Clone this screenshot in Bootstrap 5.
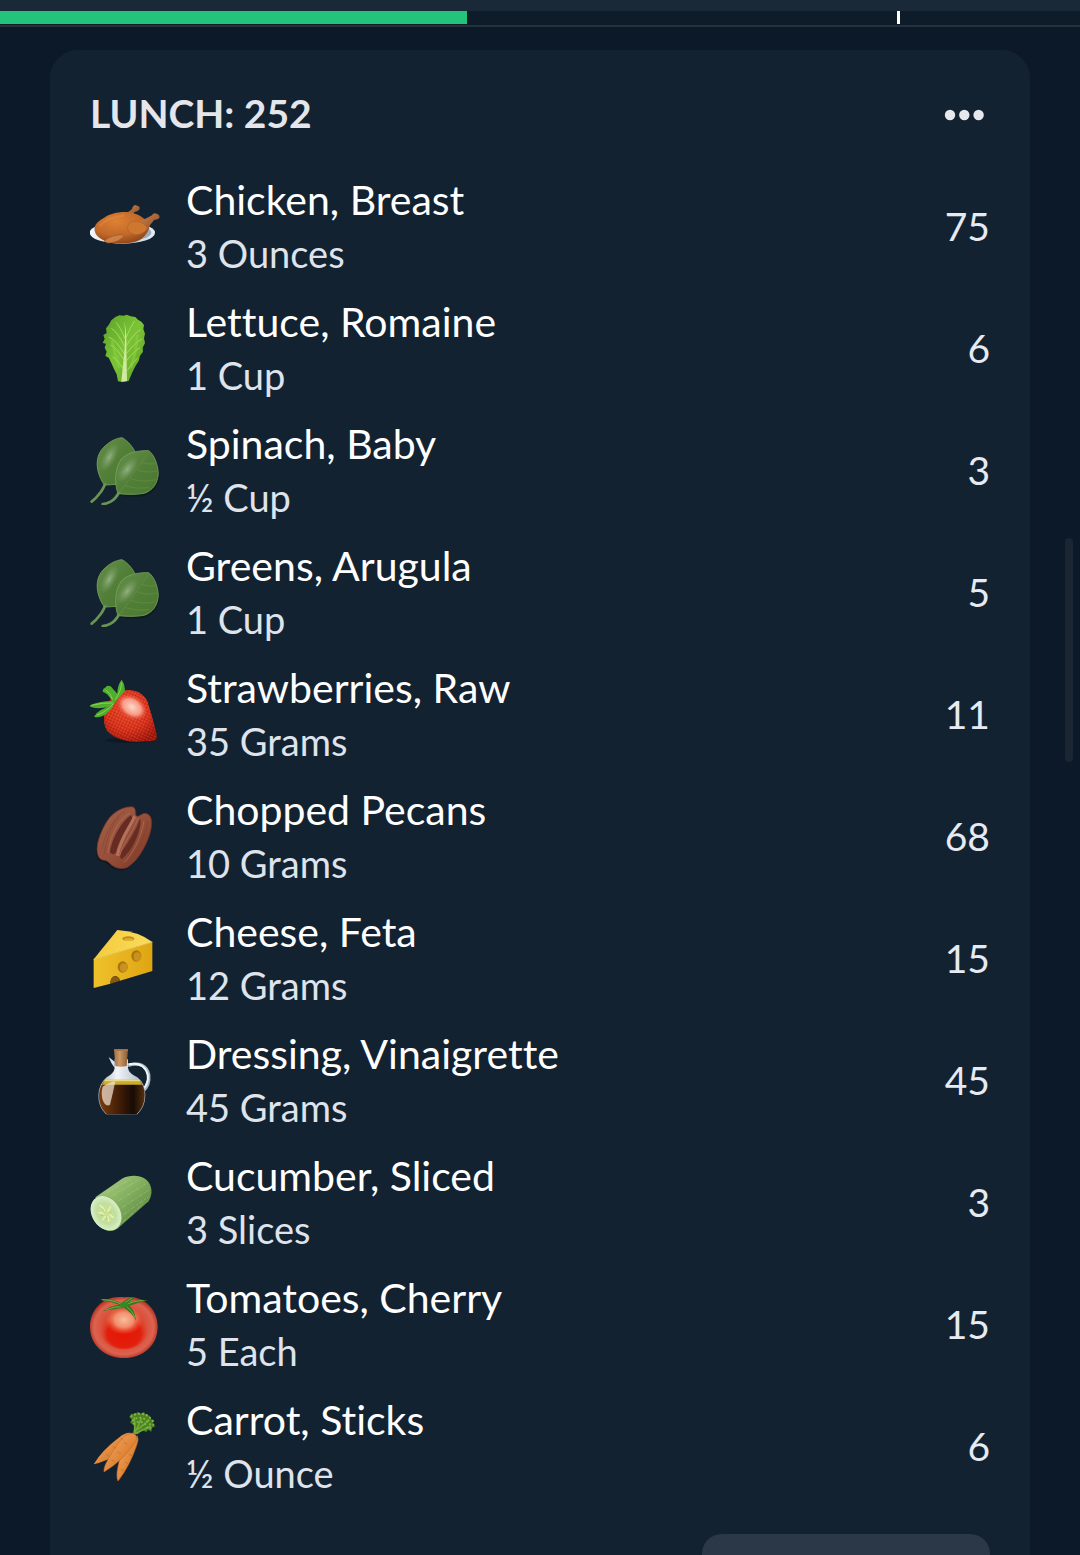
<!DOCTYPE html>
<html lang="en" data-bs-theme="dark">
<head>
<meta charset="utf-8">
<meta name="viewport" content="width=device-width, initial-scale=1">
<title>Lunch log</title>
<link href="https://cdn.jsdelivr.net/npm/bootstrap@5.3.0/dist/css/bootstrap.min.css" rel="stylesheet">
<style>
body{background:#0c1928;color:#fff;font-family:Lato,"Liberation Sans",sans-serif;font-variant-ligatures:none}
.budget-bar{background:#1a2938;padding-top:11px;border-bottom:2px solid #25313e}
.budget-bar .progress{height:14px;border-radius:0;background:#0e1b29;padding-bottom:1px;overflow:visible}
.budget-bar .progress-bar{background:#21c47a}
.budget-mark{top:0;width:3px;height:13px;background:#fff}
.log-scroll{padding:23px 50px 0}
.meal-card{background:#132231;border:0;border-radius:28px;padding:36px 40px}
.meal-title{font-size:39px;line-height:54px;font-weight:700;color:#e4e6eb}
.more-btn{padding:3px 5px 0;line-height:0}
.food-list{margin-top:33px;gap:16px}
.food-item{gap:26px}
.food-item svg{width:70px;height:70px;flex:none}
.food-name{font-size:41px;line-height:54px}
.food-qty{font-size:38px;line-height:52px;color:#dfe3ec}
.food-cal{font-size:39px;line-height:54px;color:#e6eaf3}
.add-btn{width:288px;height:96px;margin-top:35px;border-radius:20px;background:#2b3847;border:0}
.scroll-thumb{top:538px;right:7px;width:8px;height:224px;border-radius:4px;background:#1a2632}
</style>
<script src="https://cdn.jsdelivr.net/npm/bootstrap@5.3.0/dist/js/bootstrap.bundle.min.js"></script>
</head>
<body class="vh-100 d-flex flex-column overflow-hidden">
<header class="budget-bar">
  <div class="progress position-relative" role="progressbar" aria-label="Daily budget" aria-valuenow="43" aria-valuemin="0" aria-valuemax="100">
    <div class="progress-bar" style="width:43.24%"></div>
    <span class="budget-mark position-absolute" style="left:83.1%"></span>
  </div>
</header>

<!-- gradients and the leaf pair shared by the food icons -->
<svg width="0" height="0" class="position-absolute" aria-hidden="true">
  <defs>
    <radialGradient id="gMeat" cx=".4" cy=".3" r=".75"><stop offset="0" stop-color="#dd8133"/><stop offset=".6" stop-color="#c2682a"/><stop offset="1" stop-color="#8a4316"/></radialGradient>
    <linearGradient id="gBone" x1="0" y1="0" x2="1" y2="1"><stop offset="0" stop-color="#c98251"/><stop offset="1" stop-color="#8a4a20"/></linearGradient>
    <linearGradient id="gPlate" x1="0" y1="0" x2="1" y2="0"><stop offset="0" stop-color="#f3f8fd"/><stop offset=".6" stop-color="#b9c9dc"/><stop offset="1" stop-color="#e6eff8"/></linearGradient>
    <linearGradient id="gLettuce" x1="0" y1="0" x2="1" y2="1"><stop offset="0" stop-color="#5aa126"/><stop offset=".5" stop-color="#7cc436"/><stop offset="1" stop-color="#5c9f22"/></linearGradient>
    <linearGradient id="gLeaf" x1="0" y1="0" x2="1" y2="1"><stop offset="0" stop-color="#648f4b"/><stop offset=".5" stop-color="#527f38"/><stop offset="1" stop-color="#4b782f"/></linearGradient>
    <radialGradient id="gLeafShine"><stop offset="0" stop-color="#9ab58b" stop-opacity=".9"/><stop offset="1" stop-color="#7b9e66" stop-opacity="0"/></radialGradient>
    <radialGradient id="gBerry" cx=".45" cy=".35" r=".7"><stop offset="0" stop-color="#e9492f"/><stop offset=".6" stop-color="#d7301c"/><stop offset="1" stop-color="#9c150c"/></radialGradient>
    <radialGradient id="gShine"><stop offset="0" stop-color="#ffd9cc"/><stop offset=".6" stop-color="#fbab98" stop-opacity=".85"/><stop offset="1" stop-color="#ee5b40" stop-opacity="0"/></radialGradient>
    <pattern id="pSeeds" width="9" height="9" patternUnits="userSpaceOnUse" patternTransform="rotate(25)"><circle cx="2" cy="2" r="1.5" fill="#f58a45"/><circle cx="6" cy="6" r="1.5" fill="#8f1209"/></pattern>
    <linearGradient id="gPecan" x1="0" y1="0" x2="1" y2="1"><stop offset="0" stop-color="#a5614a"/><stop offset=".5" stop-color="#96503a"/><stop offset="1" stop-color="#7a3626"/></linearGradient>
    <linearGradient id="gCheeseTop" x1="0" y1="0" x2="1" y2="0"><stop offset="0" stop-color="#f3cb3c"/><stop offset="1" stop-color="#fbdc5d"/></linearGradient>
    <linearGradient id="gCheese" x1="0" y1="0" x2="1" y2="0"><stop offset="0" stop-color="#efc22a"/><stop offset="1" stop-color="#dea512"/></linearGradient>
    <linearGradient id="gCork" x1="0" y1="0" x2="1" y2="0"><stop offset="0" stop-color="#a26f42"/><stop offset=".4" stop-color="#cb9966"/><stop offset="1" stop-color="#8a5a32"/></linearGradient>
    <linearGradient id="gGlass" x1="0" y1="0" x2="1" y2="0"><stop offset="0" stop-color="#9fabb8"/><stop offset=".4" stop-color="#f2f5f8"/><stop offset="1" stop-color="#a5b0bb"/></linearGradient>
    <linearGradient id="gVinegar" x1="0" y1="0" x2="1" y2="0"><stop offset="0" stop-color="#7a3d0c"/><stop offset=".5" stop-color="#3a1906"/><stop offset=".75" stop-color="#170b05"/><stop offset="1" stop-color="#57300e"/></linearGradient>
    <linearGradient id="gCuke" x1="0" y1="0" x2="1" y2="1"><stop offset="0" stop-color="#b2d18b"/><stop offset=".4" stop-color="#8ab565"/><stop offset="1" stop-color="#4b7b32"/></linearGradient>
    <radialGradient id="gCukeCut"><stop offset="0" stop-color="#cbe28e"/><stop offset=".6" stop-color="#c1dfa0"/><stop offset="1" stop-color="#d9efc9"/></radialGradient>
    <radialGradient id="gTomato" cx=".5" cy=".5" r=".52"><stop offset="0" stop-color="#ef7a58"/><stop offset=".55" stop-color="#d94a33"/><stop offset=".85" stop-color="#dc6350"/><stop offset="1" stop-color="#b03122"/></radialGradient>
    <radialGradient id="gTomatoRed" cx=".5" cy=".6" r=".5"><stop offset="0" stop-color="#e61505"/><stop offset=".7" stop-color="#e21c0a" stop-opacity=".95"/><stop offset="1" stop-color="#e33a24" stop-opacity="0"/></radialGradient>
    <radialGradient id="gTomatoShine"><stop offset="0" stop-color="#fabd9c"/><stop offset=".5" stop-color="#f49a77" stop-opacity=".9"/><stop offset="1" stop-color="#ee6444" stop-opacity="0"/></radialGradient>
    <linearGradient id="gCarrot" x1="0" y1="0" x2="1" y2="1"><stop offset="0" stop-color="#f4ad69"/><stop offset=".5" stop-color="#e38a3d"/><stop offset="1" stop-color="#b96221"/></linearGradient>
    <symbol id="leaves" viewBox="30 42 210 210">
      <path d="M73 192C45 150 44 105 72 78C90 60 108 52 126 50C144 60 160 78 168 100C166 140 140 185 108 190C96 191 85 192 73 192Z" fill="url(#gLeaf)" stroke="#78a05f" stroke-width="2.5"/>
      <path d="M75 190Q66 210 58 218Q48 232 35 242" fill="none" stroke="#6b9452" stroke-width="8" stroke-linecap="round"/>
      <ellipse cx="88" cy="108" rx="20" ry="48" transform="rotate(28 88 108)" fill="url(#gLeafShine)"/>
      <path d="M114 220C102 185 105 140 124 114C144 94 175 88 206 89C222 100 234 130 236 158C234 190 220 210 192 220C165 226 138 222 114 220Z" fill="#0a1a10" opacity=".55" transform="translate(3 4)"/>
      <path d="M114 218C102 185 105 140 124 114C144 94 175 88 206 89C222 100 234 130 235 158C232 190 218 208 192 217C165 222 138 220 114 218Z" fill="url(#gLeaf)" stroke="#78a05f" stroke-width="2.5"/>
      <path d="M116 216Q106 234 92 242Q80 249 68 249" fill="none" stroke="#6b9452" stroke-width="8" stroke-linecap="round"/>
      <ellipse cx="142" cy="145" rx="22" ry="46" transform="rotate(38 142 145)" fill="url(#gLeafShine)"/>
      <path d="M120 212Q155 165 205 95M150 172Q190 186 226 176M170 146Q200 158 230 150M186 124Q208 132 226 128M135 194Q170 206 208 200" fill="none" stroke="#6a944d" stroke-width="1.5"/>
    </symbol>
  </defs>
</svg>

<main class="log-scroll flex-fill overflow-hidden">
  <section class="card meal-card">
    <div class="d-flex justify-content-between align-items-center">
      <h1 class="meal-title m-0">LUNCH: 252</h1>
      <button type="button" class="btn border-0 more-btn" aria-label="More options">
        <svg width="41" height="12" viewBox="0 0 41 12" fill="#e6e8ec"><circle cx="6" cy="6" r="5.2"/><circle cx="20.3" cy="6" r="5.2"/><circle cx="34.6" cy="6" r="5.2"/></svg>
      </button>
    </div>
    <ul class="food-list list-unstyled d-flex flex-column mb-0">
      <li class="food-item d-flex align-items-center">
        <svg viewBox="30 30 210 210" aria-hidden="true">
          <ellipse cx="127" cy="155" rx="98" ry="33" fill="url(#gPlate)"/><ellipse cx="130" cy="155" rx="84" ry="26" fill="#9aabc0"/>
          <path d="M138 97Q158 86 158 78Q164 69 171 74Q180 75 179 84Q175 92 164 93L150 108Z" fill="url(#gBone)"/>
          <path d="M44 150C40 130 58 118 75 109C95 95 135 88 165 98C190 105 208 125 208 140C200 165 180 184 145 186C105 190 55 185 44 150Z" fill="url(#gMeat)"/>
          <path d="M180 120Q202 112 216 103Q220 94 230 98Q241 101 238 111Q233 117 223 116Q208 132 200 150Z" fill="url(#gBone)"/>
          <path d="M142 140Q145 120 168 121Q192 122 202 142Q192 160 168 161Q146 158 142 140Z" fill="#ce7730" stroke="#b0642c" stroke-width="2"/>
          <path d="M72 180Q95 160 128 161Q135 166 122 174Q110 184 84 186Z" fill="#ca8046" stroke="#a0561f" stroke-width="2"/>
          <path d="M60 134Q85 108 130 104" fill="none" stroke="#e9954c" stroke-width="7" opacity=".35" stroke-linecap="round"/>
        </svg>
        <div class="flex-fill"><div class="food-name">Chicken, Breast</div><div class="food-qty">3 Ounces</div></div>
        <div class="food-cal">75</div>
      </li>
      <li class="food-item d-flex align-items-center">
        <svg viewBox="30 396 210 210" aria-hidden="true">
          <path d="M118 403L131 404L140 401L152 406L166 408L174 416L184 422L192 432L190 444L195 458L192 472L195 486L188 500L189 512L180 524L176 540L166 556L156 576L146 600L128 603L114 601L110 580L102 564L94 546L86 530L76 525L80 512L74 500L78 488L68 486L74 474L70 462L80 456L78 442L86 432L94 418L106 408Z" fill="url(#gLettuce)"/>
          <path d="M124 602L134 500Q137 450 133 420Q141 460 139 505L141 600Z" fill="#d0eaa0"/>
          <path d="M134 540Q110 500 92 492M134 520Q108 476 86 468M135 498Q112 452 94 442M136 475Q120 436 108 424M139 540Q162 510 180 500M139 518Q166 484 186 474M138 496Q162 456 182 446M138 470Q152 436 164 420M130 565Q112 535 98 528M142 568Q156 545 172 532" fill="none" stroke="#b4dd72" stroke-width="2.5"/>
          <path d="M96 478Q104 520 118 560M172 462Q170 510 152 560" fill="none" stroke="#8fd33f" stroke-width="9" opacity=".5"/>
        </svg>
        <div class="flex-fill"><div class="food-name">Lettuce, Romaine</div><div class="food-qty">1 Cup</div></div>
        <div class="food-cal">6</div>
      </li>
      <li class="food-item d-flex align-items-center">
        <svg aria-hidden="true"><use href="#leaves"/></svg>
        <div class="flex-fill"><div class="food-name">Spinach, Baby</div><div class="food-qty">½ Cup</div></div>
        <div class="food-cal">3</div>
      </li>
      <li class="food-item d-flex align-items-center">
        <svg aria-hidden="true"><use href="#leaves"/></svg>
        <div class="flex-fill"><div class="food-name">Greens, Arugula</div><div class="food-qty">1 Cup</div></div>
        <div class="food-cal">5</div>
      </li>
      <li class="food-item d-flex align-items-center">
        <svg viewBox="30 54 210 210" aria-hidden="true">
          <ellipse cx="150" cy="238" rx="75" ry="8" fill="#08121c" opacity=".5"/>
          <path d="M74 155C78 120 110 90 145 87C172 88 192 100 202 120C212 155 226 195 231 228C230 240 215 241 195 241C150 246 105 235 84 212C72 198 70 178 74 155Z" fill="url(#gBerry)"/>
          <path d="M74 155C78 120 110 90 145 87C172 88 192 100 202 120C212 155 226 195 231 228C230 240 215 241 195 241C150 246 105 235 84 212C72 198 70 178 74 155Z" fill="url(#pSeeds)" opacity=".7"/>
          <ellipse cx="156" cy="138" rx="50" ry="34" transform="rotate(33 156 138)" fill="url(#gShine)"/>
          <path d="M98 120Q60 120 26 134Q44 148 94 136Q55 144 42 167Q70 176 98 138Q106 118 134 92Q137 72 125 56Q112 72 112 98Q100 86 92 76Q80 72 78 78Q66 84 68 92Q84 98 92 114Z" fill="#4fae2b"/>
          <path d="M34 133Q70 124 98 126M50 163Q80 152 100 128M124 64Q126 85 106 116M76 86Q92 95 98 116" fill="none" stroke="#87d456" stroke-width="3"/>
        </svg>
        <div class="flex-fill"><div class="food-name">Strawberries, Raw</div><div class="food-qty">35 Grams</div></div>
        <div class="food-cal">11</div>
      </li>
      <li class="food-item d-flex align-items-center">
        <svg viewBox="30 420 210 210" aria-hidden="true">
          <path d="M160 438C135 434 100 450 80 482C60 515 42 560 56 588C64 602 78 594 88 606C102 622 128 628 144 618C175 600 205 545 213 505C219 475 212 460 196 457C186 456 180 466 172 466C162 462 172 448 160 438Z" fill="#050d15" opacity=".45" transform="translate(-3 5)"/>
          <path d="M160 438C135 434 100 450 80 482C60 515 42 560 56 588C64 602 78 594 88 606C102 622 128 628 144 618C175 600 205 545 213 505C219 475 212 460 196 457C186 456 180 466 172 466C162 462 172 448 160 438Z" fill="url(#gPecan)" stroke="#713123" stroke-width="2"/>
          <path d="M154 462C128 476 96 530 90 574Q100 586 108 574C118 536 142 496 158 474Z" fill="#662c24"/>
          <path d="M180 472C172 500 150 536 124 574Q116 594 126 594C158 568 178 520 182 484Z" fill="#662c24"/>
          <path d="M164 466C150 500 122 530 112 584" fill="none" stroke="#b3705a" stroke-width="9"/>
          <path d="M174 470C164 505 132 540 118 586M150 456C115 474 90 525 84 576M192 480C184 530 158 580 132 604" fill="none" stroke="#b5735c" stroke-width="2"/>
          <path d="M134 452C105 466 78 510 66 562M203 480C198 515 182 555 160 586M118 466Q85 500 72 580" fill="none" stroke="#7f3d2d" stroke-width="3" opacity=".5"/>
        </svg>
        <div class="flex-fill"><div class="food-name">Chopped Pecans</div><div class="food-qty">10 Grams</div></div>
        <div class="food-cal">68</div>
      </li>
      <li class="food-item d-flex align-items-center">
        <svg viewBox="30 39 210 210" aria-hidden="true">
          <path d="M41 148L112 60Q175 64 217 96Z" fill="url(#gCheeseTop)"/>
          <path d="M41 148L217 96V183L120 212Q116 198 104 198Q92 202 91 221L41 234Z" fill="url(#gCheese)"/>
          <path d="M91 221Q90 202 104 198Q117 199 120 212Z" fill="#8a5a0b"/>
          <path d="M41 148L217 96" stroke="#f9e078" stroke-width="2"/>
          <ellipse cx="145" cy="86" rx="18" ry="7" fill="#c08b17"/><ellipse cx="146" cy="89" rx="14" ry="4" fill="#e1b22c"/>
          <ellipse cx="169" cy="138" rx="15" ry="17" fill="#a9750f"/><ellipse cx="172" cy="140" rx="11" ry="13" fill="#c8931c"/>
          <ellipse cx="128" cy="171" rx="15" ry="17" fill="#a9750f"/><ellipse cx="131" cy="173" rx="11" ry="13" fill="#c8931c"/>
        </svg>
        <div class="flex-fill"><div class="food-name">Cheese, Feta</div><div class="food-qty">12 Grams</div></div>
        <div class="food-cal">15</div>
      </li>
      <li class="food-item d-flex align-items-center">
        <svg viewBox="30 405 210 210" aria-hidden="true">
          <path d="M144 466Q196 452 206 494Q210 525 188 544" fill="none" stroke="#aab7c5" stroke-width="10"/>
          <path d="M146 463Q192 453 203 494Q207 520 188 539" fill="none" stroke="#f2f6fa" stroke-width="6"/>
          <path d="M104 455L86 441Q94 462 104 474Z" fill="#dce4eb"/>
          <path d="M104 448H144V474Q146 490 172 502Q196 520 196 556Q196 590 172 613H78Q54 590 55 556Q56 522 80 502Q102 490 104 474Z" fill="url(#gGlass)"/>
          <path d="M74 510H178Q195 530 194 556Q194 590 170 613H80Q56 590 57 556Q58 530 74 510Z" fill="url(#gVinegar)"/>
          <path d="M75 509H178L187 524H66Z" fill="#c9ab2e"/><path d="M75 509H178L181 514H71Z" fill="#e7d986"/>
          <path d="M68 530Q88 516 106 514Q100 545 90 584Q76 592 68 570Q62 550 68 530Z" fill="#f1e5d7" opacity=".72"/>
          <path d="M102 418H144L140 468Q122 473 106 468Z" fill="url(#gCork)"/><path d="M102 418H144V423H102Z" fill="#a9774a"/>
        </svg>
        <div class="flex-fill"><div class="food-name">Dressing, Vinaigrette</div><div class="food-qty">45 Grams</div></div>
        <div class="food-cal">45</div>
      </li>
      <li class="food-item d-flex align-items-center">
        <svg viewBox="30 21 210 210" aria-hidden="true">
          <path d="M46 112L126 56C150 44 180 44 200 60C216 76 220 100 206 124L112 206Z" fill="url(#gCuke)"/>
          <path d="M80 98L150 58M100 106L178 58M116 122L196 72M126 142L206 90M130 164L206 110M128 186L190 130" stroke="#c4dba0" stroke-width="2" stroke-dasharray="14 5 6 4" opacity=".55"/>
          <ellipse cx="80" cy="160" rx="43" ry="56" transform="rotate(-33 80 160)" fill="#7eaa58"/>
          <ellipse cx="78" cy="160" rx="42" ry="55" transform="rotate(-33 78 160)" fill="url(#gCukeCut)"/>
          <path d="M60 136Q70 142 74 152M92 140Q87 148 84 154M56 158Q64 158 70 162M68 180Q72 174 76 169M86 184Q86 176 84 171M100 172Q94 168 90 164" fill="none" stroke="#eef2b4" stroke-width="4" stroke-linecap="round"/>
          <path d="M66 146L72 154M80 180V172M94 156L88 159M60 168L70 165" stroke="#9cc262" stroke-width="2"/>
        </svg>
        <div class="flex-fill"><div class="food-name">Cucumber, Sliced</div><div class="food-qty">3 Slices</div></div>
        <div class="food-cal">3</div>
      </li>
      <li class="food-item d-flex align-items-center">
        <svg viewBox="30 387 210 210" aria-hidden="true">
          <path d="M132 412C190 404 233 446 233 500C233 555 190 594 132 594C74 594 30 555 30 500C30 446 74 404 132 412Z" fill="url(#gTomato)"/>
          <ellipse cx="132" cy="508" rx="72" ry="60" fill="url(#gTomatoRed)"/>
          <ellipse cx="132" cy="480" rx="56" ry="44" fill="url(#gTomatoShine)"/>
          <path d="M58 419Q95 414 124 430Q140 414 165 411Q158 420 144 428Q172 418 204 421Q178 428 148 437Q166 452 168 482Q154 456 132 444Q105 446 68 454Q88 438 118 434Q90 424 58 419Z" fill="#377622"/>
          <path d="M66 419Q102 420 126 434L156 414M190 421Q155 424 136 436Q158 452 166 474M76 450Q104 438 130 440" fill="none" stroke="#79ae41" stroke-width="3"/>
          <ellipse cx="132" cy="435" rx="12" ry="8" fill="#2f8c22"/>
        </svg>
        <div class="flex-fill"><div class="food-name">Tomatoes, Cherry</div><div class="food-qty">5 Each</div></div>
        <div class="food-cal">15</div>
      </li>
      <li class="food-item d-flex align-items-center">
        <svg viewBox="30 66 210 210" aria-hidden="true">
          <path d="M158 134L164 112L150 100L156 92L148 84L154 74L166 76L172 69L182 74L192 69L198 78L210 80L212 90L222 94L218 104L226 112L216 116L214 128L204 122L198 130L188 122L174 136Z" fill="#4c8222"/>
          <path d="M163 134Q176 112 184 88M164 134Q190 122 212 112M164 130Q166 104 162 84M172 122Q196 104 208 92" fill="none" stroke="#72a93a" stroke-width="5"/>
          <g fill="none" stroke="#7eb53f" stroke-width="6" stroke-linecap="round" stroke-dasharray="1 11"><path d="M154 82Q185 64 212 88Q224 98 218 114"/><path d="M158 94Q184 76 206 100Q214 110 210 122"/><path d="M162 104Q182 90 200 110Q204 118 200 126"/><path d="M164 76Q184 72 200 78"/></g>
          <path d="M154 132Q138 128 118 145Q65 185 41 226Q78 218 112 196Z" fill="url(#gCarrot)"/>
          <path d="M172 140Q178 152 170 170Q150 230 114 277Q104 260 122 200Z" fill="url(#gCarrot)" stroke="#a8571e" stroke-width="1.5"/>
          <path d="M158 132Q176 140 168 156Q130 215 72 249Q70 236 82 215Q115 155 138 138Z" fill="url(#gCarrot)" stroke="#b5662a" stroke-width="1.5"/>
          <path d="M98 172L108 178M78 196L86 201M132 160L142 166M112 188L122 194M94 212L103 218M146 196L156 200M136 220L144 224M122 242L131 245M122 148L130 154" stroke="#bd6b29" stroke-width="2"/>
        </svg>
        <div class="flex-fill"><div class="food-name">Carrot, Sticks</div><div class="food-qty">½ Ounce</div></div>
        <div class="food-cal">6</div>
      </li>
    </ul>
    <button type="button" class="btn add-btn align-self-end" aria-label="Add food"></button>
  </section>
</main>
<div class="scroll-thumb position-fixed" aria-hidden="true"></div>
</body>
</html>
